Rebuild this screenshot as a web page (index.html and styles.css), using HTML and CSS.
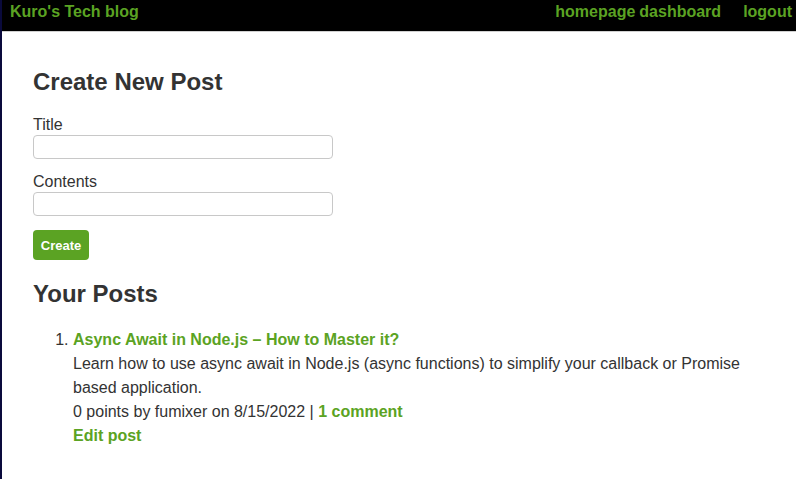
FILE: index.html
```
<!DOCTYPE html>
<html>
<head>
<meta charset="utf-8">
<link rel="stylesheet" href="styles.css">
</head>
<body>
<header class="topbar">
  <a class="brand" href="#">Kuro's Tech blog</a>
  <nav class="nav">
    <a href="#">homepage</a>
    <a href="#">dashboard</a>
    <a class="logout" href="#">logout</a>
  </nav>
</header>
<main class="main">
  <h2 class="heading">Create New Post</h2>
  <form class="form">
    <label class="label">Title</label>
    <input class="input" type="text">
    <label class="label">Contents</label>
    <input class="input" type="text">
    <button class="btn" type="button">Create</button>
  </form>
  <h2 class="heading posts-heading">Your Posts</h2>
  <ol class="posts">
    <li class="post">
      <a class="post-title" href="#">Async Await in Node.js – How to Master it?</a>
      <p class="post-desc">Learn how to use async await in Node.js (async functions) to simplify your callback or Promise based application.</p>
      <p class="post-meta">0 points by fumixer on 8/15/2022 | <a class="link" href="#">1 comment</a></p>
      <a class="link" href="#">Edit post</a>
    </li>
  </ol>
</main>
</body>
</html>
```
FILE: styles.css
```
html, body {
  margin: 0;
  padding: 0;
}
body {
  font-family: "Liberation Sans", Arial, Helvetica, sans-serif;
  font-size: 16px;
  color: #333;
  background: #fff;
  border-left: 2px solid #0a0a3c;
  min-height: 479px;
  box-sizing: border-box;
}
a {
  color: #5ba323;
  text-decoration: none;
  font-weight: bold;
}
.topbar {
  display: flex;
  justify-content: space-between;
  align-items: flex-start;
  background: #000;
  border-bottom: 1px solid #d0d0d0;
  padding: 2px 4px 0 10px;
  margin-left: -2px;
  height: 29px;
}
.brand, .nav a {
  font-size: 16px;
  line-height: 20px;
}
.nav {
  display: flex;
  gap: 4px;
}
.nav .logout {
  margin-left: 18px;
}
.main {
  padding: 0 33px 0 31px;
}
.heading {
  font-size: 24px;
  font-weight: bold;
  margin: 36px 0 19px;
  line-height: 28px;
}
.posts-heading {
  margin-top: 20px;
  margin-bottom: 20px;
}
.form {
  display: flex;
  flex-direction: column;
  align-items: flex-start;
}
.label {
  line-height: 20px;
}
.input {
  width: 300px;
  height: 24px;
  box-sizing: border-box;
  border: 1px solid #c8c8c8;
  border-radius: 4px;
  margin: 0 0 13px;
  font: inherit;
}
.btn {
  background: #5ba323;
  color: #fff;
  border: 0;
  border-radius: 4px;
  font-family: inherit;
  font-weight: bold;
  font-size: 13px;
  height: 30px;
  width: 56px;
  padding: 0;
  margin-top: 1px;
}
.posts {
  margin: 0;
  padding-left: 40px;
  line-height: 24px;
}
.post-desc, .post-meta {
  margin: 0;
}
```
